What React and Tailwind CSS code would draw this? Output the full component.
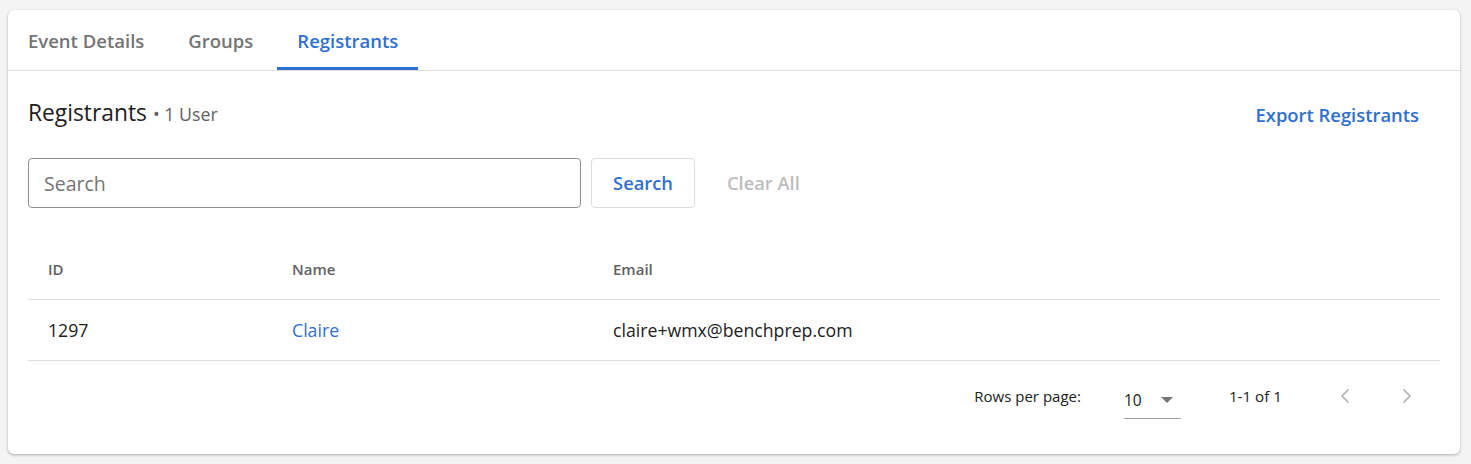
import { ChevronLeft, ChevronRight } from 'lucide-react';

const tabs = ['Event Details', 'Groups', 'Registrants'];

const rows = [{ id: 1297, name: 'Claire', email: 'claire+wmx@benchprep.com' }];

export default function App() {
  return (
    <div className="min-h-screen bg-[#f4f4f4] pt-[10px] pl-2 pr-[11px] pb-[10px] font-['Open_Sans',sans-serif]">
      <div className="bg-white rounded-md shadow-[0_1px_3px_rgba(0,0,0,0.3)] h-[444px]">
        {/* tabs */}
        <div className="flex h-[61px] border-b border-[#dedede] gap-1">
          {tabs.map((t) => {
            const active = t === 'Registrants';
            return (
              <div
                key={t}
                className={
                  active
                    ? 'flex items-center px-5 text-[18.5px] font-semibold text-[#2f6fcf] border-b-[3px] border-[#2f6fcf] pt-[4px]'
                    : 'flex items-center px-5 text-[18.5px] font-semibold text-[#747474] pt-[4px] border-b-[3px] border-transparent'
                }
              >
                {t}
              </div>
            );
          })}
        </div>

        <div className="px-5">
          {/* title row */}
          <div className="flex items-center justify-between pt-[25px] pb-[28px]">
            <div className="flex items-baseline">
              <span className="text-[22.8px] text-[#212121]">Registrants</span>
              <span className="text-[17.8px] text-[#616161] ml-1.5">• 1 User</span>
            </div>
            <button className="text-[18.4px] font-semibold text-[#2f6fcf] pr-[21px] pt-1">Export Registrants</button>
          </div>

          {/* search row */}
          <div className="flex items-center">
            <div className="w-[553px] h-[50px] border border-[#8f8f8f] rounded flex items-center px-[15px] text-[19.5px] text-[#757575]">
              Search
            </div>
            <button className="ml-[10px] w-[104px] h-[50px] border border-[#dcdcdc] rounded text-[18.3px] font-semibold text-[#2f6fcf]">
              Search
            </button>
            <button className="ml-8 text-[18.3px] font-semibold text-[#bdbdbd]">Clear All</button>
          </div>

          {/* table */}
          <div className="mt-[31px]">
            <div className="flex h-[61px] items-center border-b border-[#dedede] text-[15px] font-semibold text-[#616161]">
              <div className="w-[244px] pl-5">ID</div>
              <div className="w-[321px] pl-5">Name</div>
              <div className="flex-1 pl-5">Email</div>
            </div>
            {rows.map((r) => (
              <div key={r.id} className="flex h-[61px] items-center border-b border-[#dedede] text-[17.7px] text-[#212121]">
                <div className="w-[244px] pl-5">{r.id}</div>
                <div className="w-[321px] pl-5 text-[#2f6fcf]">{r.name}</div>
                <div className="flex-1 pl-5">{r.email}</div>
              </div>
            ))}
          </div>

          {/* pagination */}
          <div className="flex items-center justify-end h-[70px] text-[15px] text-[#212121]">
            <span>Rows per page:</span>
            <div className="ml-[43px] w-[57px] h-[36px] flex items-center justify-between border-b border-[#9e9e9e] mt-[9px] text-[15.5px]">
              <span>10</span>
              <svg width="12" height="6" viewBox="0 0 12 6" className="mr-2">
                <path d="M0 0h12L6 6z" fill="#757575" />
              </svg>
            </div>
            <span className="ml-12 text-[15.2px]">1-1 of 1</span>
            <ChevronLeft className="ml-[51px] w-6 h-6 text-[#bdbdbd]" strokeWidth={1.8} />
            <ChevronRight className="ml-[38px] mr-[21px] w-6 h-6 text-[#bdbdbd]" strokeWidth={1.8} />
          </div>
        </div>
      </div>
    </div>
  );
}
